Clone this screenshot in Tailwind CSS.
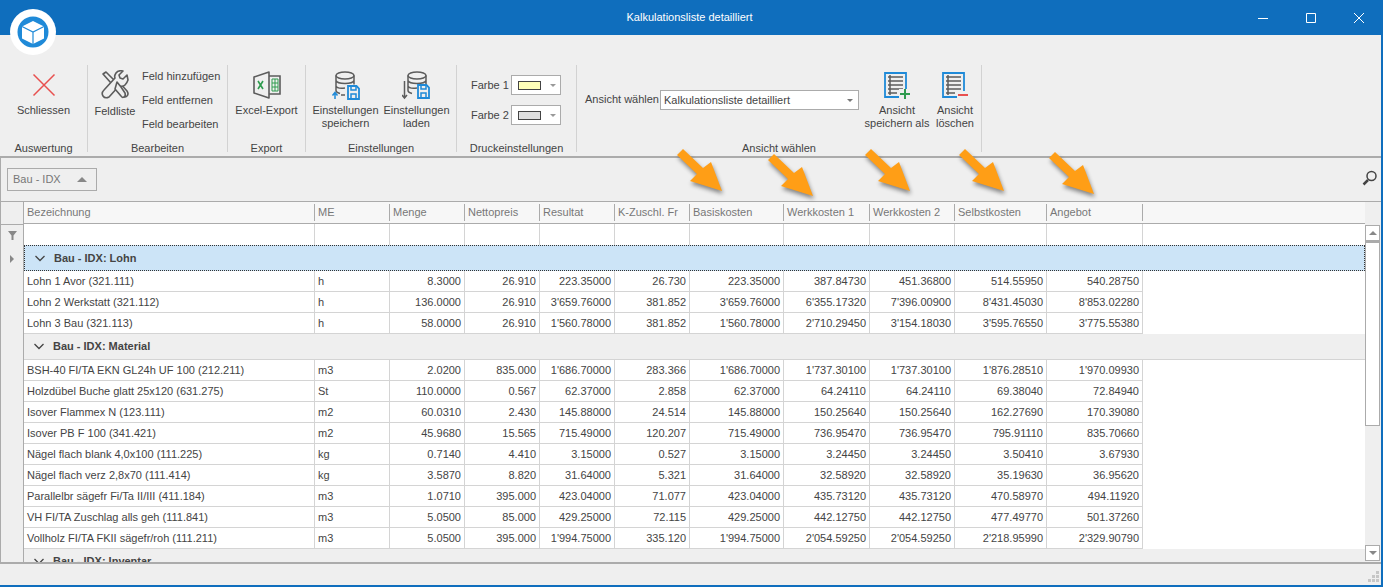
<!DOCTYPE html>
<html lang="de">
<head>
    <meta charset="UTF-8">
    <title>Kalkulationsliste detailliert</title>
    <script src="https://cdn.jsdelivr.net/npm/@tailwindcss/browser@4"></script>
</head>
<body class="h-screen overflow-hidden bg-[#efefef] font-['Liberation_Sans',sans-serif] text-[11px] leading-[13px] text-[#444]">
<div class="relative flex h-full flex-col border-r-2 border-b-2 border-[#0f6ebd]">

    <!-- Titelleiste -->
    <div class="relative flex h-[35px] shrink-0 items-center justify-center bg-[#0f6ebd] text-white">
        <span class="ml-[-2px]">Kalkulationsliste detailliert</span>
        <div class="absolute right-0 top-0 flex h-[35px] items-center gap-[36px] pr-[16px]">
            <svg class="h-[12px] w-[12px]" viewBox="0 0 12 12" fill="none" stroke="#fff"><path d="M1 6.500h10"/></svg>
            <svg class="h-[12px] w-[12px]" viewBox="0 0 12 12" fill="none" stroke="#fff"><path d="M1.500 1.500h9v9h-9z"/></svg>
            <svg class="h-[12px] w-[12px]" viewBox="0 0 12 12" fill="none" stroke="#fff"><path d="M1 1l10 10M11 1L1 11"/></svg>
        </div>
    </div>

    <!-- Logo -->
    <div class="absolute left-[10px] top-[9px] flex h-[46px] w-[46px] items-center justify-center rounded-full bg-white">
        <svg class="h-[32px] w-[32px]" viewBox="0 0 32 32">
            <circle cx="16" cy="16" r="15.500" fill="#1f8ad8"/>
            <path d="M16 5l11 5.500v12L16 28 5 22.500v-12z" fill="#fff"/>
            <path d="M5 10.500L16 16l11-5.500M16 16v12" fill="none" stroke="#1f8ad8" stroke-width="1.200"/>
        </svg>
    </div>

    <!-- Ribbon -->
    <div class="flex h-[121px] shrink-0 pt-[30px]">
        <div class="flex h-[87px] w-[88px] flex-col border-r border-[#d2d2d2]">
            <div class="flex flex-1 flex-col items-center pt-[8px]">
                <svg class="h-[24px] w-[24px]" viewBox="0 0 24 24" fill="none" stroke="#e8504f" stroke-width="1.500"><path d="M1.500 1.500l21 21M22.500 1.500l-21 21"/></svg>
                <span class="mt-[7px]">Schliessen</span>
            </div>
            <div class="h-[10px] text-center">Auswertung</div>
        </div>

        <div class="flex h-[87px] w-[140px] flex-col border-r border-[#d2d2d2]">
            <div class="flex flex-1 pl-[7px]">
                <div class="flex w-[40px] flex-col items-center pt-[5px]">
                    <svg class="h-[30px] w-[30px]" viewBox="0 0 30 30" fill="none" stroke="#5c5c5c" stroke-width="1.600" stroke-linejoin="round">
                        <path d="M3 4l3-2 8 8-3 3zM13 14l4-4 10 11q2 3 0 5t-5 0z"/>
                        <path d="M27 5l-4 4-3-1-1-3 4-4q-5-1-7 2t-1 5L4 20q-3 3-1 6t6 1l10-11q4 1 6-1t3-5z" fill="#efefef"/>
                        <path d="M17 12l4 5 4 6q1 3-1 4t-3-1l-6-7z" fill="#efefef"/>
                    </svg>
                    <span class="mt-[5px]">Feldliste</span>
                </div>
                <div class="flex flex-col gap-[11px] pl-[7px] pt-[5px]">
                    <span>Feld hinzufügen</span>
                    <span>Feld entfernen</span>
                    <span>Feld bearbeiten</span>
                </div>
            </div>
            <div class="h-[10px] text-center">Bearbeiten</div>
        </div>

        <div class="flex h-[87px] w-[78px] flex-col border-r border-[#d2d2d2]">
            <div class="flex flex-1 flex-col items-center pt-[6px]">
                <svg class="h-[28px] w-[28px]" viewBox="0 0 28 28" fill="none">
                    <path d="M1 6l15-5v26L1 22z" fill="#efefef" stroke="#5c5c5c" stroke-width="1.600" stroke-linejoin="round"/>
                    <path d="M16 5h11v18H16" stroke="#5c5c5c" stroke-width="1.600"/>
                    <path d="M5 10l5 8M10 10l-5 8" stroke="#2e9b4e" stroke-width="1.600"/>
                    <path d="M19 8h6v12h-6zM19 12h6M19 16h6M22 8v12" stroke="#2e9b4e"/>
                </svg>
                <span class="mt-[5px]">Excel-Export</span>
            </div>
            <div class="h-[10px] text-center">Export</div>
        </div>

        <div class="flex h-[87px] w-[151px] flex-col border-r border-[#d2d2d2]">
            <div class="flex flex-1 pl-[4px] pt-[6px]">
                <div class="flex w-[71px] flex-col items-center text-center">
                    <svg class="h-[29px] w-[29px]" viewBox="0 0 29 29" fill="none">
                        <g stroke="#5c5c5c" stroke-width="1.500"><ellipse cx="14" cy="4.500" rx="9" ry="3.500"/><path d="M5 4.500v15q0 2 4 3M23 4.500v9M5 9.500q1 3 9 3t9-3M5 15q1 3 9 2"/></g>
                        <path d="M17 15h8.500l2.500 2.500V28H17z" fill="#efefef" stroke="#1f8ad8" stroke-width="1.800"/>
                        <path d="M20 15h5v4h-5zM20 28v-5h5v5" stroke="#1f8ad8" stroke-width="1.500"/>
                        <path d="M4 28v-6M1.500 24.500L4 21.500l2.500 3" stroke="#1f8ad8" stroke-width="1.500"/>
                        <path d="M10 24h4" stroke="#5c5c5c" stroke-width="1.500"/>
                    </svg>
                    <span class="mt-[4px]">Einstellungen<br>speichern</span>
                </div>
                <div class="flex w-[71px] flex-col items-center text-center">
                    <svg class="h-[29px] w-[29px]" viewBox="0 0 29 29" fill="none">
                        <g stroke="#5c5c5c" stroke-width="1.500"><ellipse cx="15" cy="4.500" rx="9" ry="3.500"/><path d="M6 4.500v15q0 2 4 3M24 4.500v9M6 9.500q1 3 9 3t9-3M6 15q1 3 9 2"/></g>
                        <path d="M16 14h8.500l2.500 2.500V27H16z" fill="#efefef" stroke="#1f8ad8" stroke-width="1.800"/>
                        <path d="M19 14h5v4h-5zM19 27v-5h5v5" stroke="#1f8ad8" stroke-width="1.500"/>
                        <path d="M2.500 10v17M0 24l2.500 3L5 24" stroke="#5c5c5c" stroke-width="1.500"/>
                    </svg>
                    <span class="mt-[4px]">Einstellungen<br>laden</span>
                </div>
            </div>
            <div class="h-[10px] text-center">Einstellungen</div>
        </div>

        <div class="flex h-[87px] w-[120px] flex-col border-r border-[#d2d2d2]">
            <div class="flex flex-1 flex-col gap-[10px] pl-[14px] pt-[10px]">
                <div class="flex items-center gap-[2px]">
                    <span class="w-[38px] whitespace-nowrap">Farbe 1</span>
                    <div class="flex h-[20px] w-[50px] items-center border border-[#ababab] bg-white pl-[6px]">
                        <div class="h-[9px] w-[23px] border border-[#444] bg-[#ffffb9]"></div>
                        <div class="ml-[9px] h-0 w-0 border-x-[3px] border-t-[3px] border-x-transparent border-t-[#999]"></div>
                    </div>
                </div>
                <div class="flex items-center gap-[2px]">
                    <span class="w-[38px] whitespace-nowrap">Farbe 2</span>
                    <div class="flex h-[20px] w-[50px] items-center border border-[#ababab] bg-white pl-[6px]">
                        <div class="h-[9px] w-[23px] border border-[#444] bg-[#e0e0e0]"></div>
                        <div class="ml-[9px] h-0 w-0 border-x-[3px] border-t-[3px] border-x-transparent border-t-[#999]"></div>
                    </div>
                </div>
            </div>
            <div class="h-[10px] text-center">Druckeinstellungen</div>
        </div>

        <div class="flex h-[87px] w-[405px] flex-col border-r border-[#d2d2d2]">
            <div class="flex flex-1">
                <div class="flex items-start pl-[8px] pt-[25px]">
                    <span class="mt-[3px] w-[75px] whitespace-nowrap">Ansicht wählen</span>
                    <div class="flex h-[20px] w-[199px] items-center justify-between border border-[#ababab] bg-white pl-[3px] pr-[5px]">
                        <span>Kalkulationsliste detailliert</span>
                        <div class="h-0 w-0 border-x-[3px] border-t-[3px] border-x-transparent border-t-[#777]"></div>
                    </div>
                </div>
                <div class="ml-[6px] flex w-[64px] flex-col items-center pt-[7px] text-center whitespace-nowrap">
                    <svg class="h-[27px] w-[27px]" viewBox="0 0 27 27" fill="none">
                        <path d="M1 1h21v24H1z" stroke="#1f8ad8" stroke-width="1.800"/>
                        <path d="M4 5h15M4 9h15M4 13h15M4 17h15M4 21h9M6 3v20" stroke="#5c5c5c" stroke-width="1.500"/>
                        <path d="M15 17h12v10H15z" fill="#efefef"/>
                        <path d="M21 17v10M16 22h10" stroke="#2e9b4e" stroke-width="2"/>
                    </svg>
                    <span class="mt-[5px]">Ansicht<br>speichern als</span>
                </div>
                <div class="flex w-[52px] flex-col items-center pt-[7px] text-center">
                    <svg class="h-[27px] w-[27px]" viewBox="0 0 27 27" fill="none">
                        <path d="M1 1h21v24H1z" stroke="#1f8ad8" stroke-width="1.800"/>
                        <path d="M4 5h15M4 9h15M4 13h15M4 17h15M4 21h9M6 3v20" stroke="#5c5c5c" stroke-width="1.500"/>
                        <path d="M15 19h12v8H15z" fill="#efefef"/>
                        <path d="M16 23h10" stroke="#e8504f" stroke-width="2"/>
                    </svg>
                    <span class="mt-[5px]">Ansicht<br>löschen</span>
                </div>
            </div>
            <div class="h-[10px] text-center">Ansicht wählen</div>
        </div>
    </div>

    <!-- Gruppierung und Tabelle -->
    <div class="flex min-h-0 flex-1 flex-col border-y-2 border-l border-[#ababab]">
        <div class="flex h-[43px] shrink-0 items-center justify-between pl-[6px] pr-[3px]">
            <div class="flex h-[23px] w-[90px] items-center justify-between border border-[#ababab] pl-[5px] pr-[9px] text-[#777]">
                <span>Bau - IDX</span>
                <div class="h-0 w-0 border-x-[5px] border-b-[5px] border-x-transparent border-b-[#888]"></div>
            </div>
            <svg class="mb-[4px] h-[16px] w-[16px]" viewBox="0 0 16 16" fill="none" stroke="#444" stroke-width="1.500"><circle cx="9.500" cy="6" r="4.500"/><path d="M6 10l-4.500 4.500" stroke-width="2.500"/></svg>
        </div>
        <div class="flex min-h-0 flex-1 overflow-hidden">
            <div class="flex w-[23px] shrink-0 flex-col border-t border-r border-[#ababab]">
                <div class="h-[23px] shrink-0 border-b border-[#ababab]"></div>
                <div class="flex h-[21px] shrink-0 items-center justify-center">
                    <svg class="h-[9px] w-[9px]" viewBox="0 0 9 9" fill="#888"><path d="M0 0h9L5.500 4.500V9h-2V4.500z"/></svg>
                </div>
                <div class="flex h-[26px] shrink-0 items-center justify-center pr-[1px]">
                    <div class="h-0 w-0 border-y-[4px] border-l-[4px] border-y-transparent border-l-[#888]"></div>
                </div>
            </div>
            <div class="min-w-0 flex-1">
                <div id="grid"></div>
            </div>
            <div class="flex w-[16px] shrink-0 flex-col border-t border-[#ababab] bg-[#efefef] pb-[1px] pr-[1px] pt-[23px]">
                <div class="flex h-[16px] shrink-0 items-center justify-center border border-[#ababab] bg-white">
                    <div class="h-0 w-0 border-x-[4px] border-b-[4px] border-x-transparent border-b-[#888]"></div>
                </div>
                <div class="h-[185px] shrink-0 border-x border-b border-t-2 border-[#ababab] bg-white"></div>
                <div class="flex-1"></div>
                <div class="flex h-[16px] shrink-0 items-center justify-center border border-[#ababab] bg-white">
                    <div class="h-0 w-0 border-x-[4px] border-t-[4px] border-x-transparent border-t-[#888]"></div>
                </div>
            </div>
        </div>
    </div>

    <!-- Statusleiste -->
    <div class="flex h-[21px] shrink-0 items-end justify-end pb-[2px] pr-[2px]">
        <svg class="h-[12px] w-[12px]" viewBox="0 0 12 12" fill="#c6c6c6"><path d="M9 0h3v3H9zM5 4h3v3H5zM9 4h3v3H9zM1 8h3v3H1zM5 8h3v3H5zM9 8h3v3H9z"/></svg>
    </div>

    <!-- Pfeile -->
    <svg class="pointer-events-none absolute inset-0 h-[587px] w-[1383px] drop-shadow-[1px_3px_2px_rgba(0,0,0,0.45)]" viewBox="0 0 1383 587" fill="#ff9e16">
        <path d="M677 155l6-6 20 19 8-6 11 29-32-10 7-7z"/>
        <path d="M768 160l6-6 20 19 8-6 11 29-32-10 7-7z"/>
        <path d="M865 155l6-6 20 19 8-6 11 29-32-10 7-7z"/>
        <path d="M959 155l6-6 20 19 8-6 11 29-32-10 7-7z"/>
        <path d="M1049 158l6-6 20 19 8-6 11 29-32-10 7-7z"/>
    </svg>
</div>

<script>
    const widths = ['w-[291px]', 'w-[75px]', 'w-[75px]', 'w-[75px]', 'w-[75px]', 'w-[75px]', 'w-[94px]', 'w-[86px]', 'w-[85px]', 'w-[92px]', 'w-[96px]'];
    const headers = ['Bezeichnung', 'ME', 'Menge', 'Nettopreis', 'Resultat', 'K-Zuschl. Fr', 'Basiskosten', 'Werkkosten 1', 'Werkkosten 2', 'Selbstkosten', 'Angebot'];

    const groups = [
        ['Lohn', [
            ['Lohn 1 Avor (321.111)', 'h', '8.3000', '26.910', '223.35000', '26.730', '223.35000', '387.84730', '451.36800', '514.55950', '540.28750'],
            ['Lohn 2 Werkstatt (321.112)', 'h', '136.0000', '26.910', "3'659.76000", '381.852', "3'659.76000", "6'355.17320", "7'396.00900", "8'431.45030", "8'853.02280"],
            ['Lohn 3 Bau (321.113)', 'h', '58.0000', '26.910', "1'560.78000", '381.852', "1'560.78000", "2'710.29450", "3'154.18030", "3'595.76550", "3'775.55380"],
        ]],
        ['Material', [
            ['BSH-40 FI/TA EKN GL24h UF 100 (212.211)', 'm3', '2.0200', '835.000', "1'686.70000", '283.366', "1'686.70000", "1'737.30100", "1'737.30100", "1'876.28510", "1'970.09930"],
            ['Holzdübel Buche glatt 25x120 (631.275)', 'St', '110.0000', '0.567', '62.37000', '2.858', '62.37000', '64.24110', '64.24110', '69.38040', '72.84940'],
            ['Isover Flammex N (123.111)', 'm2', '60.0310', '2.430', '145.88000', '24.514', '145.88000', '150.25640', '150.25640', '162.27690', '170.39080'],
            ['Isover PB F 100 (341.421)', 'm2', '45.9680', '15.565', '715.49000', '120.207', '715.49000', '736.95470', '736.95470', '795.91110', '835.70660'],
            ['Nägel flach blank 4,0x100 (111.225)', 'kg', '0.7140', '4.410', '3.15000', '0.527', '3.15000', '3.24450', '3.24450', '3.50410', '3.67930'],
            ['Nägel flach verz 2,8x70 (111.414)', 'kg', '3.5870', '8.820', '31.64000', '5.321', '31.64000', '32.58920', '32.58920', '35.19630', '36.95620'],
            ['Parallelbr sägefr Fi/Ta II/III (411.184)', 'm3', '1.0710', '395.000', '423.04000', '71.077', '423.04000', '435.73120', '435.73120', '470.58970', '494.11920'],
            ['VH FI/TA Zuschlag alls geh (111.841)', 'm3', '5.0500', '85.000', '429.25000', '72.115', '429.25000', '442.12750', '442.12750', '477.49770', '501.37260'],
            ['Vollholz FI/TA FKII sägefr/roh (111.211)', 'm3', '5.0500', '395.000', "1'994.75000", '335.120', "1'994.75000", "2'054.59250", "2'054.59250", "2'218.95990", "2'329.90790"],
        ]],
        ['Inventar', []],
    ];

    function headerRow() {
        const cells = headers.map((h, i) => `
            <div class="${widths[i]} flex h-full shrink-0 items-center border-r border-[#ababab] pl-[3px] text-[#777]">${h}</div>`).join('');
        return `<div class="flex h-[23px] items-center border-y border-[#ababab] bg-[#f7f7f7] py-[2px]">${cells}</div>`;
    }

    function filterRow() {
        const cells = widths.map(w => `<div class="${w} h-full shrink-0 border-r border-[#d4d4d4]"></div>`).join('');
        return `<div class="flex h-[21px] bg-white">${cells}</div>`;
    }

    function groupRow(name, selected) {
        const look = selected
            ? 'border border-dotted border-[#333] bg-[#cce4f7]'
            : 'border-b border-[#d4d4d4] bg-[#efefef]';
        return `<div class="flex h-[26px] items-center gap-[9px] pl-[10px] font-bold ${look}">
            <svg class="h-[7px] w-[10px]" viewBox="0 0 10 7" fill="none" stroke="#444" stroke-width="1.300"><path d="M0.500 1l4.500 4.500L9.500 1"/></svg>
            <span>Bau - IDX: ${name}</span>
        </div>`;
    }

    function dataRow(row) {
        const cells = row.map((v, i) => `
            <div class="${widths[i]} ${i < 2 ? 'pl-[3px]' : 'pr-[3px] text-right'} shrink-0 truncate border-r border-b border-[#d4d4d4] leading-[20px]">${v}</div>`).join('');
        return `<div class="flex h-[21px] bg-white">${cells}</div>`;
    }

    // Tabelle aufbauen
    let html = headerRow() + filterRow();
    groups.forEach((g, index) => {
        html += groupRow(g[0], index === 0);
        g[1].forEach(r => { html += dataRow(r); });
    });
    document.getElementById('grid').innerHTML = html;
</script>
</body>
</html>
